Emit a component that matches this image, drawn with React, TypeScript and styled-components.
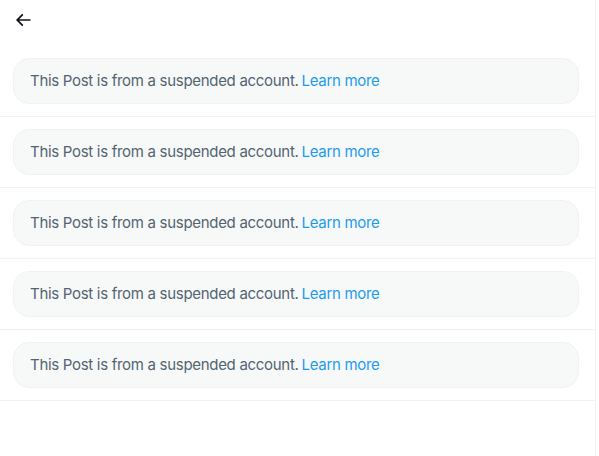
import styled, { createGlobalStyle } from 'styled-components'

const GlobalStyle = createGlobalStyle`
  html, body {
    margin: 0;
    padding: 0;
    background: #ffffff;
  }
  body {
    font-family: Inter, "Noto Sans", sans-serif;
    -webkit-font-smoothing: antialiased;
  }
`

const Column = styled.main`
  width: 595px;
  min-height: 456px;
  border-right: 1px solid #eff3f4;
  box-sizing: content-box;
`

const Header = styled.header`
  display: flex;
  align-items: flex-start;
  height: 46px;
  padding: 10px 0 0 13px;
  box-sizing: border-box;
`

const BackButton = styled.button`
  display: flex;
  padding: 0;
  border: none;
  background: none;
  color: #0f1419;
  cursor: pointer;
`

const Row = styled.article`
  padding: 12px 16px 12px 13px;
  border-bottom: 1px solid #eff3f4;
`

const Notice = styled.div`
  display: flex;
  align-items: center;
  padding: 12px 16px;
  border: 1px solid #eff3f4;
  border-radius: 16px;
  background: #f7f9f9;
  font-size: 15px;
  line-height: 20px;
  letter-spacing: -0.3px;
  color: #536471;
`

const LearnMore = styled.a`
  color: #1d9bf0;
  text-decoration: none;
  margin-left: 3px;
`

function BackIcon() {
  return (
    <svg width="20" height="20" viewBox="0 0 24 24" fill="currentColor">
      <path d="M7.414 13l5.043 5.04-1.414 1.42L3.586 12l7.457-7.46 1.414 1.42L7.414 11H21v2H7.414z" />
    </svg>
  )
}

const rows = [1, 2, 3, 4, 5]

export default function App() {
  return (
    <>
      <GlobalStyle />
      <Column>
        <Header>
          <BackButton aria-label="Back">
            <BackIcon />
          </BackButton>
        </Header>
        {rows.map((id) => (
          <Row key={id}>
            <Notice>
              This Post is from a suspended account.
              <LearnMore href="#">Learn more</LearnMore>
            </Notice>
          </Row>
        ))}
      </Column>
    </>
  )
}
